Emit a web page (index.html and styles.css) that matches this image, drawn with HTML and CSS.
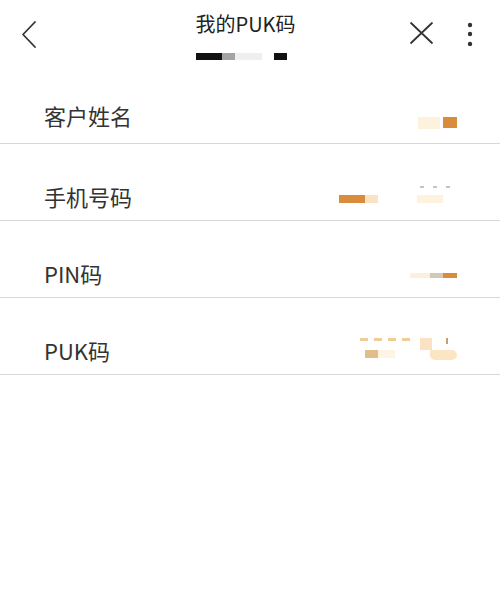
FILE: index.html
```html
<!DOCTYPE html>
<html lang="zh-CN">
<head>
<meta charset="utf-8">
<title>我的PUK码</title>
<link rel="stylesheet" href="styles.css">
</head>
<body>
<div class="page">
  <header class="header">
    <div class="nav-left">
      <svg class="icon-back" width="18" height="30" viewBox="0 0 18 30"><path d="M15 2 L3 14.5 L15 27" fill="none" stroke="#333" stroke-width="1.8" stroke-linecap="round" stroke-linejoin="round"/></svg>
    </div>
    <div class="nav-center">
      <div class="title-block">
        <div class="title">我的PUK码</div>
        <div class="mask-row">
          <span class="m m-black m-w26"></span><span class="m m-gray m-w13"></span><span class="m m-light m-w27"></span><span class="m m-gap12"></span><span class="m m-black m-w13"></span>
        </div>
      </div>
    </div>
    <div class="nav-right">
      <svg class="icon-close" width="26" height="26" viewBox="0 0 26 26"><path d="M3 3 L24 23 M24 3 L3 23" fill="none" stroke="#333" stroke-width="1.8" stroke-linecap="round"/></svg>
      <svg class="icon-more" width="8" height="26" viewBox="0 0 8 26"><circle cx="4" cy="5" r="2.2" fill="#333"/><circle cx="4" cy="14" r="2.2" fill="#333"/><circle cx="4" cy="24" r="2.2" fill="#333"/></svg>
    </div>
  </header>

  <div class="list">
    <div class="row row-first">
      <span class="label">客户姓名</span>
      <span class="val val-1">
        <span class="line"><span class="b b-cream b-22x12"></span><span class="b b-orange b-14x11"></span></span>
      </span>
    </div>
    <div class="row">
      <span class="label">手机号码</span>
      <span class="val val-2">
        <span class="line line-dash"><span class="b b-dash"></span><span class="b b-dash"></span><span class="b b-dash"></span></span>
        <span class="line"><span class="b b-orange b-26x8"></span><span class="b b-peach b-13x8"></span><span class="b b-sp39"></span><span class="b b-cream b-26x8"></span><span class="b b-sp14"></span></span>
      </span>
    </div>
    <div class="row">
      <span class="label">PIN码</span>
      <span class="val val-3">
        <span class="line"><span class="b b-faint b-20x5"></span><span class="b b-tan-gray b-13x5"></span><span class="b b-orange b-14x5"></span></span>
      </span>
    </div>
    <div class="row">
      <span class="label">PUK码</span>
      <span class="val val-4">
        <span class="line line-top"><span class="b b-odash"></span><span class="b b-odash"></span><span class="b b-odash"></span><span class="b b-odash"></span><span class="b b-peach b-12x12"></span><span class="b b-tick"></span></span>
        <span class="line"><span class="b b-tan b-13x8"></span><span class="b b-cream2 b-17x8"></span><span class="b b-sp35"></span><span class="b b-blob"></span></span>
      </span>
    </div>
  </div>
</div>
</body>
</html>
```

FILE: styles.css
```css
* { box-sizing: border-box; }
html, body { margin: 0; padding: 0; background: #fff; }
body {
  font-family: "Noto Sans CJK SC", "Noto Sans", Roboto, sans-serif;
  color: #333;
}
.page { width: 500px; height: 595px; background: #fff; overflow: hidden; }

.header { display: flex; height: 67px; }
.nav-left { width: 83px; padding: 20px 0 0 20px; display: flex; align-items: flex-start; }
.nav-center { flex: 1; display: flex; justify-content: center; padding-top: 12px; }
.nav-right { width: 92px; padding: 20px 0 0 0; display: flex; align-items: flex-start; }
.icon-close { display: block; }
.icon-more { display: block; margin-left: 32px; }
.icon-back { display: block; }

.title-block { display: flex; flex-direction: column; align-items: flex-start; }
.title { font-size: 20px; line-height: 24px; color: #222; white-space: nowrap; }
.mask-row { display: flex; margin-top: 17px; height: 7px; }
.m { display: block; height: 7px; }
.m-black { background: #111; }
.m-gray { background: #a3a3a3; }
.m-light { background: #efefef; }
.m-gap12 { width: 12px; }
.m-w26 { width: 26px; }
.m-w13 { width: 13px; }
.m-w27 { width: 27px; }

.row {
  height: 77px;
  border-bottom: 1px solid #d8d8d8;
  display: flex;
  align-items: flex-end;
  justify-content: space-between;
  padding: 0 43px 0 44px;
}
.label { font-size: 22px; line-height: 22px; padding-bottom: 13px; color: #333; white-space: nowrap; }
.row-first .label { padding-bottom: 17px; }

.val { display: flex; flex-direction: column; align-items: flex-end; }
.val-1 { margin-bottom: 14px; }
.val-2 { margin-bottom: 17px; }
.val-3 { margin-bottom: 19px; }
.val-4 { margin-bottom: 14px; }
.line { display: flex; align-items: flex-start; }
.val-1 .line { gap: 3px; }
.line-dash { gap: 9px; margin-right: 7px; margin-bottom: 7px; }
.line-top { gap: 6px; align-items: flex-start; margin-right: 9px; }

.b { display: block; }
.b-cream { background: #fdf2dd; }
.b-cream2 { background: #fdf4e4; }
.b-orange { background: #d98c3c; }
.b-peach { background: #fae2c3; }
.b-faint { background: #fcefe0; }
.b-tan-gray { background: #d6c6b4; }
.b-tan { background: #e0bd8a; }
.b-22x12 { width: 22px; height: 12px; }
.b-14x11 { width: 14px; height: 11px; }
.b-26x8 { width: 26px; height: 8px; }
.b-13x8 { width: 13px; height: 8px; }
.b-17x8 { width: 17px; height: 8px; }
.b-20x5 { width: 20px; height: 5px; }
.b-13x5 { width: 13px; height: 5px; }
.b-14x5 { width: 14px; height: 5px; }
.b-12x12 { width: 12px; height: 12px; margin-left: 4px; }
.b-sp39 { width: 39px; height: 8px; }
.b-sp35 { width: 35px; height: 8px; }
.b-sp14 { width: 14px; height: 8px; }
.b-dash { width: 4px; height: 2px; background: #c4c4c4; }
.b-odash { width: 8px; height: 3px; background: #f0cc98; }
.b-tick { width: 2px; height: 6px; background: #c8a06c; margin-left: 8px; }
.b-blob { width: 27px; height: 10px; background: #fce5c2; border-radius: 0 6px 6px 6px; }
```
